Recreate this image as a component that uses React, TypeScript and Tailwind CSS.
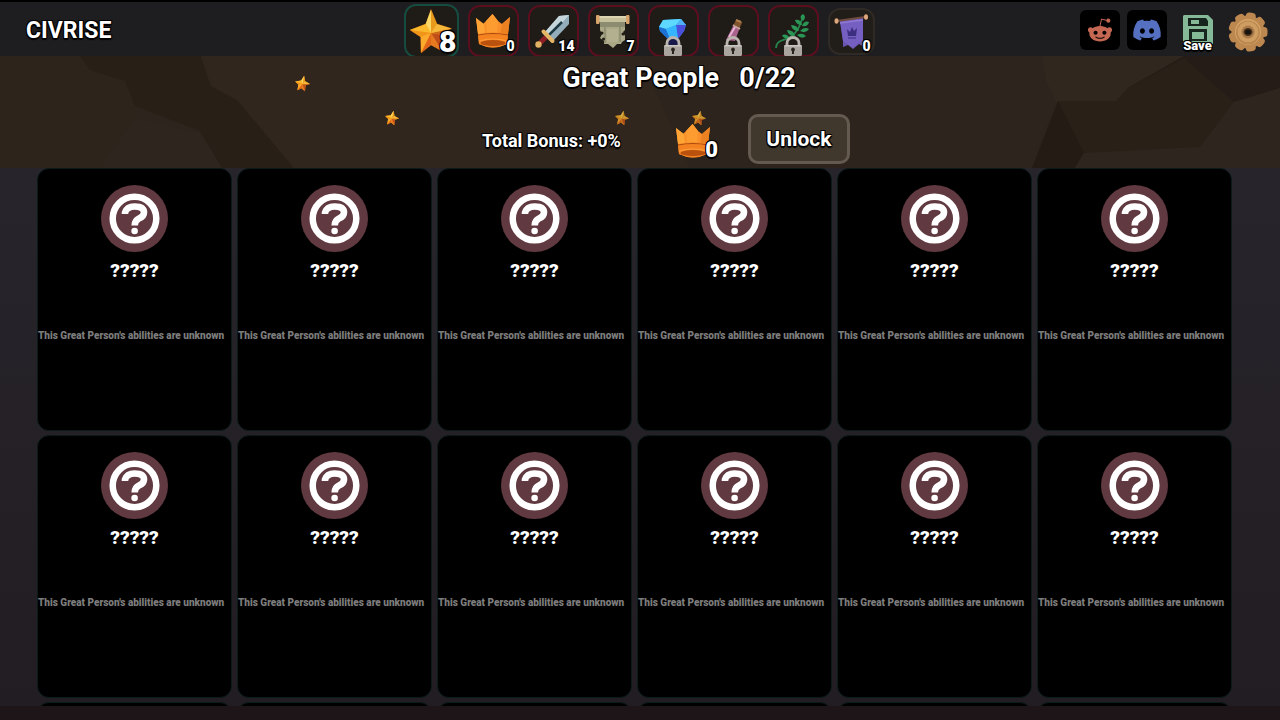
import type { ReactNode } from 'react';
import { FaDiscord, FaRedditAlien } from 'react-icons/fa';

const outline =
  '[text-shadow:-1px_-1px_0_#000,1px_-1px_0_#000,-1px_1px_0_#000,1px_1px_0_#000,0_2px_1px_#000]';

function StarShape({ className }: { className: string }) {
  return (
    <svg viewBox="5 4 44 47" className={className} aria-hidden="true">
      <path d="M27 5.500 33 20 47.500 24.500 36.500 30.500 38 47 27 41 17 49 16.700 33 6 26 21.700 20Z" fill="#f8a51c" stroke="#7c3b0c" strokeWidth="0.600" />
      <path d="M27 5.500 33 20 27 29Z" fill="#e89a1c" />
      <path d="M27 5.500 21.700 20 27 29Z" fill="#f9d865" />
      <path d="M6 26 21.700 20 27 29Z" fill="#fbb92d" />
      <path d="M6 26 16.700 33 27 29Z" fill="#f0941a" />
      <path d="M17 49 16.700 33 27 29Z" fill="#fbaa2c" />
      <path d="M17 49 27 41 27 29Z" fill="#e2661a" />
      <path d="M38 47 27 41 27 29Z" fill="#e57a20" />
      <path d="M38 47 36.500 30.500 27 29Z" fill="#c04e1a" />
      <path d="M47.500 24.500 36.500 30.500 27 29Z" fill="#cc661a" />
      <path d="M47.500 24.500 33 20 27 29Z" fill="#f5b83a" />
    </svg>
  );
}

function Crown({ className }: { className: string }) {
  return (
    <svg viewBox="0 0 36 34" className={className} aria-hidden="true">
      <path d="M1 4 8 10 12 6 17.500 0 23 7 27 10 35 3 33 20 32 30Q18 37 4 30L3 20Z" fill="#f9902a" />
      <path d="M1 4 9 10 10 20 3 20Z" fill="#ffa536" />
      <path d="M17.500 0 23 7 22 20H12L11 7Z" fill="#fd9c30" />
      <path d="M35 3 27 10 25 20 33 20Z" fill="#ec8122" />
      <path d="M3 20Q18 17 33 20L32 30Q18 37 4 30Z" fill="#f58220" />
      <path d="M3 21Q18 18 33 21" fill="none" stroke="#a84a10" strokeWidth="1.200" />
      <ellipse cx="18" cy="29" rx="12.500" ry="3" fill="#b9510f" />
      <path d="M4 27Q18 23 32 27" fill="none" stroke="#ffa03c" strokeWidth="1.200" />
    </svg>
  );
}

function Padlock() {
  return (
    <g transform="translate(16 31)">
      <path d="M3 10V7a6 5.500 0 0 1 12 0v3" fill="none" stroke="#b9b4ad" strokeWidth="2.800" />
      <rect x="0" y="9" width="18" height="11" rx="1.500" fill="#aaa59f" />
      <path d="M0 10.500Q0 9 1.500 9H16.500Q18 9 18 10.500Z" fill="#cbc7c2" />
      <path d="M9 11.500a2 2 0 0 1 1 3.700V18H8v-2.800a2 2 0 0 1 1-3.700Z" fill="#2a2520" />
    </g>
  );
}

function Drawing({ children }: { children: ReactNode }) {
  return (
    <svg viewBox="0 0 51 52" className="h-[52px] w-[51px] shrink-0" aria-hidden="true">
      {children}
    </svg>
  );
}

const sword = (
  <Drawing>
    <path d="M17 27 31 11 41 10 41 19 25 36Z" fill="#93aeba" />
    <path d="M17 27 31 11 41 10 22 31Z" fill="#c6d7dc" />
    <path d="M21 30 34 17" stroke="#1d3a43" strokeWidth="2.500" />
    <path d="M18 32 12 38" stroke="#8c1f26" strokeWidth="5" />
    <path d="M15.500 26.500 24.500 36" stroke="#e5b667" strokeWidth="4" strokeLinecap="round" />
    <circle cx="10.500" cy="39.500" r="3.200" fill="#e2b263" />
  </Drawing>
);

const parchment = (
  <Drawing>
    <path d="M12 14H37V25L35 27 37 31V35L34 37 33 39H29L25 43 20 39H16V36L12 33 14 29 12 25Z" fill="#aaa887" />
    <path d="M12 17H37V22H12Z" fill="#8b8c70" />
    <path d="M17 18V38M32 18V37" stroke="#8b8b70" strokeWidth="1.500" />
    <path d="M19 24H30V37H19Z" fill="#b3b090" />
    <path d="M10 11H39V17H10Z" fill="#c6c09b" />
    <path d="M10 11H39V13H10Z" fill="#ddd5b0" />
    <rect x="8" y="10" width="3.500" height="9" rx="1" fill="#d7a46b" />
    <rect x="38" y="10" width="3.500" height="9" rx="1" fill="#d7a46b" />
    <circle cx="14" cy="28" r="1.500" fill="#1f1c14" />
    <circle cx="15.500" cy="34" r="1.500" fill="#1f1c14" />
    <circle cx="35" cy="29" r="1.500" fill="#1f1c14" />
  </Drawing>
);

const gem = (
  <Drawing>
    <path d="M11 22 15 15 33 14 38 20 36 26 30 34H20L12 26Z" fill="#2b9df0" />
    <path d="M15 15 33 14 28 20 18 24 11 22Z" fill="#5fd8ff" />
    <path d="M33 14 38 20 28 20Z" fill="#52b1f4" />
    <path d="M28 20 38 20 36 26 30 34Z" fill="#4b50dc" />
    <path d="M11 22 18 24 22 34H20L12 26Z" fill="#1f70d3" />
    <path d="M18 24 28 20 30 34H22Z" fill="#35b5ff" />
    <path d="M19 33H31V40H19Z" fill="#171a4a" />
    <Padlock />
  </Drawing>
);

const potion = (
  <Drawing>
    <path d="M26 19 32 22 27 36 18 35Z" fill="#a9628c" />
    <path d="M27 22 21 32" stroke="#e7b4d3" strokeWidth="2" />
    <path d="M25 20 32 24" stroke="#c9a9a0" strokeWidth="2" />
    <path d="M27 17 33 20" stroke="#80542f" strokeWidth="6" />
    <path d="M28 15 33 17" stroke="#b07e4c" strokeWidth="2" />
    <Padlock />
  </Drawing>
);

const herb = (
  <Drawing>
    <path d="M8 43Q8 37 15 35Q29 32 34 14" fill="none" stroke="#28824b" strokeWidth="1.800" />
    <g fill="#2a9656">
      <path d="M35 16Q30 12 35 9Q39 12 35 16Z" />
      <path d="M34 20Q28 20 27 15Q33 14 34 20Z" />
      <path d="M34 21Q36 15 41 17Q40 22 34 21Z" />
      <path d="M31 26Q24 26 23 20Q30 20 31 26Z" />
      <path d="M32 26Q36 21 41 24Q38 29 32 26Z" />
      <path d="M27 31Q20 31 19 25Q26 25 27 31Z" />
      <path d="M29 30Q34 27 38 31Q34 35 29 30Z" />
      <path d="M22 34Q15 34 14 30Q20 28 22 34Z" />
    </g>
    <Padlock />
  </Drawing>
);

const pennant = (
  <svg viewBox="0 0 47 46" className="h-[46px] w-[47px] shrink-0" aria-hidden="true">
    <path d="M12 12 35 9 35 34 36 38 31 35 25 40 20 36 15 38 15 32Z" fill="#6a55b0" />
    <path d="M12 12 35 9 35 31 25 39 15 32Z" fill="#755fc0" />
    <path d="M12 14 35 11" stroke="#8f79d4" strokeWidth="1.500" />
    <path d="M19 20 22 23 24 18 26 22 29 19 28 27H20Z" fill="#3d2f80" />
    <path d="M20 29H28" stroke="#3d2f80" strokeWidth="1" />
    <path d="M9 12 37 8" stroke="#6f4c3d" strokeWidth="2" />
    <ellipse cx="8.500" cy="12" rx="2" ry="2.800" fill="#dda77b" />
    <ellipse cx="38" cy="8" rx="2" ry="2.800" fill="#dda77b" />
  </svg>
);

interface Resource {
  name: string;
  icon: ReactNode;
  count?: number;
}

const resources: Resource[] = [
  { name: 'Crowns', icon: <Crown className="h-[34px] w-9" />, count: 0 },
  { name: 'Swords', icon: sword, count: 14 },
  { name: 'Maps', icon: parchment, count: 7 },
  { name: 'Gems', icon: gem },
  { name: 'Potions', icon: potion },
  { name: 'Herbs', icon: herb },
];

const gearTeeth = [0, 40, 80, 120, 160, 200, 240, 280, 320];

const iconButton = 'flex size-10 items-center justify-center rounded-md bg-black';

function TopBar() {
  return (
    <header className="grid h-14 grid-cols-[1fr_auto_1fr] border-t-2 border-black bg-[#1e1d1f]">
      <h1 className={`self-center pt-0.5 pl-[26px] text-[23px] leading-8 font-bold ${outline}`}>CIVRISE</h1>
      <nav className="flex items-start gap-[9px] pt-[2px] pr-0.5">
        <button aria-label="Stars" className="relative flex h-[54px] w-[55px] items-center justify-center rounded-xl border-2 border-[#164c3f] bg-[#1f1c18]">
          <StarShape className="h-[47px] w-11" />
          <span className={`absolute right-0 bottom-0 text-[30px] leading-7 font-black ${outline}`}>8</span>
        </button>
        {resources.map((r) => (
          <button
            key={r.name}
            aria-label={r.name}
            className="relative mt-px flex h-[52px] w-[51px] items-center justify-center rounded-xl border-2 border-[#5a0e1e] bg-[#1f1c18]"
          >
            {r.icon}
            {r.count !== undefined && (
              <span className={`absolute right-0.5 bottom-[3px] text-sm leading-3 font-black ${outline}`}>{r.count}</span>
            )}
          </button>
        ))}
        <button aria-label="Banners" className="relative mt-1 flex h-[47px] w-[47px] items-center justify-center rounded-xl border-2 border-[#2f2a25] bg-[#211e1a]">
          {pennant}
          <span className={`absolute right-0.5 bottom-px text-sm leading-3 font-black ${outline}`}>0</span>
        </button>
      </nav>
      <div className="flex items-center justify-end gap-[7px] pr-3">
        <a href="#reddit" aria-label="Reddit" className={iconButton}>
          <FaRedditAlien className="size-[26px] text-[#c46753]" />
        </a>
        <a href="#discord" aria-label="Discord" className={iconButton}>
          <FaDiscord className="size-[30px] text-[#5570c0]" />
        </a>
        <button className="relative flex h-10 w-[47px] items-start justify-center pt-1">
          <svg viewBox="0 0 32 32" className="size-8" aria-hidden="true">
            <path d="M2 1H26L31 6V30H1V2Z" fill="#84b897" />
            <path d="M6 4H24L26 7V12H6Z" fill="#17241d" />
            <path d="M9 6H17V10H9Z" fill="#84b897" />
            <path d="M7 15H25V27H7Z" fill="#17241d" />
            <path d="M10 18H22V25H10Z" fill="#84b897" />
          </svg>
          <span className={`absolute inset-x-0 -bottom-1 text-center text-[13px] leading-4 font-black ${outline}`}>Save</span>
        </button>
        <button aria-label="Settings" className="pt-1">
          <svg viewBox="0 0 40 40" className="size-10" aria-hidden="true">
            <g fill="#bd8850">
              {gearTeeth.map((angle) => (
                <rect key={angle} x="15" y="0.500" width="10" height="12" rx="3.500" transform={`rotate(${angle + 10} 20 20)`} />
              ))}
              <circle cx="20" cy="20" r="16.500" />
            </g>
            <circle cx="20" cy="20" r="13" fill="#d6a668" />
            <circle cx="20" cy="20.500" r="12" fill="#b9864e" />
            <circle cx="20" cy="20" r="10.500" fill="#cd9d61" />
            <circle cx="20" cy="20" r="6.500" fill="#a97a48" />
            <ellipse cx="20" cy="20" rx="4.500" ry="4" fill="#4a341f" />
            <ellipse cx="20" cy="20" rx="3" ry="2.500" fill="#1a130c" />
          </svg>
        </button>
      </div>
    </header>
  );
}

function Rocks() {
  return (
    <svg viewBox="0 0 1280 112" preserveAspectRatio="none" className="absolute inset-0 h-full w-full" aria-hidden="true">
      <path d="M0 0H200L130 50 215 112H0Z" fill="#2d241c" />
      <path d="M80 0H201L211 30 237 44 294 112H222L200 75 135 50 125 25 90 14Z" fill="#282017" />
      <path d="M135 62 200 77 222 112H100Z" fill="#2e251f" />
      <path d="M201 0H700V112H294L237 44 211 30Z" fill="#30261e" />
      <path d="M640 0H1042L1056 45 1032 112H690Z" fill="#2d241e" />
      <path d="M1042 0H1184L1128 32 1116 46H1056L1046 25Z" fill="#30271f" />
      <path d="M1184 0H1280V32L1234 46 1128 32Z" fill="#261c17" />
      <path d="M1058 45H1116L1128 32 1184 2 1234 46 1200 91 1084 97Z" fill="#292018" />
      <path d="M1058 45 1084 97 1075 112H1032Z" fill="#251b15" />
      <path d="M1084 97 1200 91 1234 46 1280 32V112H1075Z" fill="#2e251e" />
    </svg>
  );
}

function Summary() {
  return (
    <section className="relative flex h-28 flex-col bg-[#2d241d]">
      <Rocks />
      <StarShape className="absolute top-[19px] left-[23%] h-[17px] w-[17px] rotate-12" />
      <StarShape className="absolute top-[54px] left-[30%] h-4 w-4 rotate-12" />
      <StarShape className="absolute top-[54px] left-[48%] h-4 w-4 rotate-12 opacity-80" />
      <StarShape className="absolute top-[54px] left-[54%] h-4 w-4 rotate-12 opacity-80" />
      <h2 className={`relative flex justify-center gap-5 pt-1.5 pl-[78px] text-[27px] leading-8 font-bold ${outline}`}>
        <span>Great People</span>
        <span>0/22</span>
      </h2>
      <div className="relative flex items-center justify-center pt-5 pl-[52px]">
        <p className={`pt-1 text-lg leading-6 font-bold ${outline}`}>Total Bonus: +0%</p>
        <div className="relative ml-[54px] w-[43px] pt-1">
          <Crown className="h-[34px] w-9" />
          <span className={`absolute right-0 -bottom-1 text-[22px] leading-6 font-black ${outline}`}>0</span>
        </div>
        <button className={`ml-[30px] h-[50px] w-[102px] rounded-[10px] border-[3px] border-[#645a50] bg-[#40372d] text-[21px] leading-6 font-bold ${outline}`}>
          Unlock
        </button>
      </div>
    </section>
  );
}

function PersonCard({ loaded }: { loaded: boolean }) {
  return (
    <li className="flex h-[263px] flex-col items-center rounded-xl border border-[#0b1b1a] bg-black pt-4">
      {loaded && (
        <>
          <svg viewBox="0 0 67 67" className="h-[67px] w-[67px]" aria-hidden="true">
            <circle cx="33.500" cy="33.500" r="33.500" fill="#613940" />
            <circle cx="33.500" cy="33.500" r="21.800" fill="none" stroke="#fff" strokeWidth="6.500" />
            <path d="M24 29V27.500Q26 21.500 33.500 21.500Q43 21.500 43 27.500Q43 31.500 38 33.500Q33.700 35.500 33.700 40.500" fill="none" stroke="#fff" strokeWidth="6.600" strokeLinejoin="round" />
            <circle cx="33.600" cy="46" r="3.300" fill="#fff" />
          </svg>
          <h3 className="mt-[7px] text-[19px] leading-6 font-black">?????</h3>
          <p className="mt-[45px] self-start text-[10px] leading-4 font-black whitespace-nowrap text-[#7c7c7c]">
            This Great Person's abilities are unknown
          </p>
        </>
      )}
    </li>
  );
}

const peopleCount = 18;
const loadedCount = 12;

export default function App() {
  return (
    <div className="flex h-screen flex-col overflow-hidden bg-[#1e1518] font-['Roboto','Open_Sans',sans-serif] text-white">
      <TopBar />
      <Summary />
      <main className="mb-3.5 min-h-0 flex-1 overflow-hidden bg-linear-to-b from-[#27242b] to-[#211d22] pr-12 pl-[37px]">
        <ul className="grid grid-cols-6 gap-x-[5px] gap-y-1">
          {Array.from({ length: peopleCount }, (_, i) => (
            <PersonCard key={i} loaded={i < loadedCount} />
          ))}
        </ul>
      </main>
    </div>
  );
}
